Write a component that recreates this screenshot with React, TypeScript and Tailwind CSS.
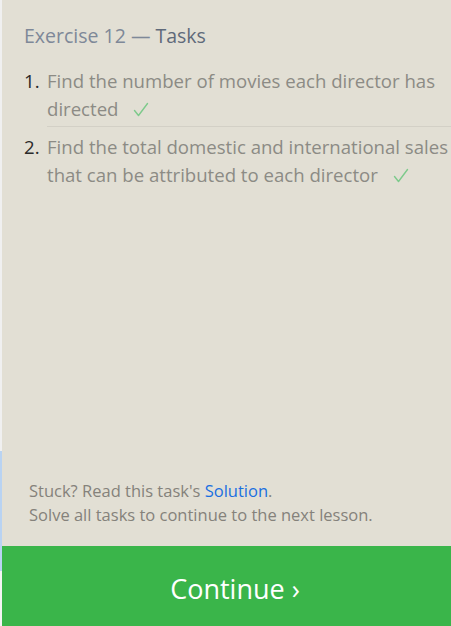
import React from "react";

function Check() {
  return (
    <svg
      width="16"
      height="15"
      viewBox="0 0 16 15"
      className="inline-block ml-[15px] align-[-1px]"
      fill="none"
      stroke="#7dca8b"
      strokeWidth="1.4"
      strokeLinecap="round"
      strokeLinejoin="round"
    >
      <polyline points="1.5,8.5 5.5,13.5 14.5,1.5" />
    </svg>
  );
}

export default function App() {
  const font = { fontFamily: '"Open Sans", "Noto Sans", sans-serif' };
  return (
    <div className="w-[451px] h-[626px] flex bg-[#f2f2f2] overflow-hidden" style={font}>
      <div className="w-[2px] shrink-0 flex flex-col">
        <div className="h-[451px] bg-[#f0f0f0]" />
        <div className="h-[120px] bg-[#b9d3f2]" />
        <div className="flex-1 bg-[#f4f4f4]" />
      </div>
      <div className="w-[466px] shrink-0 flex flex-col bg-[#e2dfd4]">
        <div className="flex-1 flex flex-col pl-[22px] pt-[22px] overflow-hidden">
          <h2 className="text-[19.5px] leading-[28px] text-[#7e8898]">
            Exercise 12 — <span className="text-[#5f6a7a]">Tasks</span>
          </h2>
          <ol className="mt-[17px]">
            <li className="flex text-[18.6px] leading-[27.5px]">
              <span className="w-[23px] shrink-0 text-[#2a2a2a]">1.</span>
              <div className="w-[420px] border-b border-[#d3d0c6] pb-[4px] text-[#8c8b85]">
                Find the number of movies each director has directed
                <Check />
              </div>
            </li>
            <li className="flex text-[18.6px] leading-[28px] mt-[6px]">
              <span className="w-[23px] shrink-0 text-[#2a2a2a]">2.</span>
              <div className="w-[420px] text-[#8c8b85]">
                Find the total domestic and international sales that can be attributed to each director
                <Check />
              </div>
            </li>
          </ol>
        </div>
        <div className="pl-[27px] pb-[19px] text-[16.5px] leading-[24px] text-[#85827b]">
          <p>
            Stuck? Read this task's <span className="text-[#1a6fe0]">Solution</span>.
          </p>
          <p>Solve all tasks to continue to the next lesson.</p>
        </div>
        <div className="h-[80px] bg-[#3ab54a] flex items-center justify-center pt-[6px] text-white text-[27px]">
          Continue ›
        </div>
      </div>
    </div>
  );
}
